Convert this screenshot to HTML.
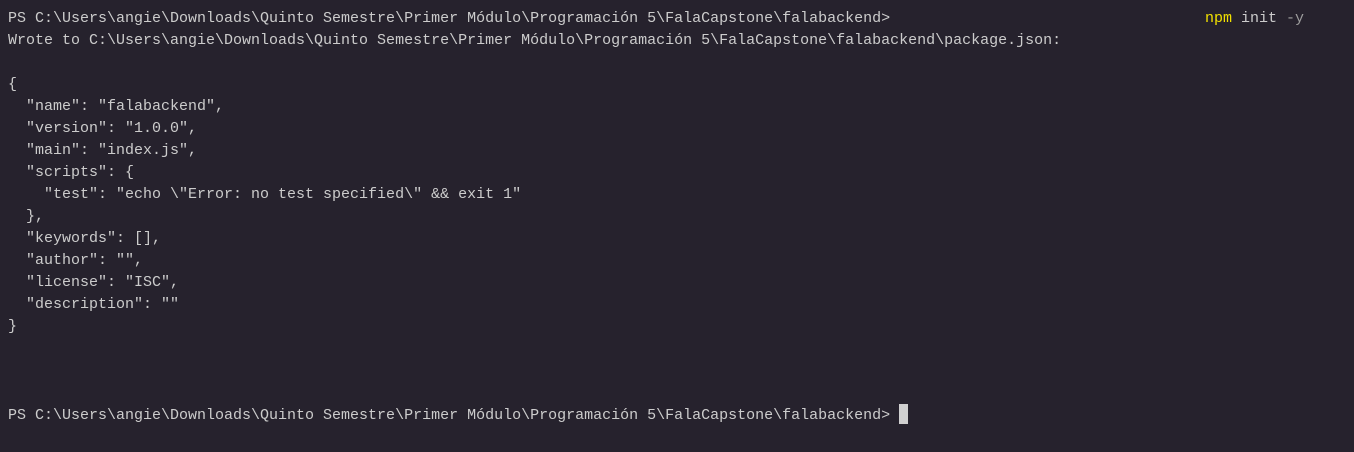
<!DOCTYPE html>
<html><head><meta charset="utf-8"><style>
html,body{margin:0;padding:0;width:1354px;height:452px;background:#26222d;overflow:hidden}
pre{position:absolute;left:8px;top:8px;margin:0;font-family:"Liberation Mono",monospace;font-size:15px;line-height:22px;color:#cccccc;white-space:pre}
.y{color:#f1e000}.g{color:#9d9d9d}
.cur{display:inline-block;width:9px;height:20px;background:#d0d0d0;vertical-align:-5px}
#npm{position:absolute;left:1205px;top:8px;margin:0;font-family:"Liberation Mono",monospace;font-size:15px;line-height:22px;color:#cccccc}
</style></head><body>
<pre>PS C:\Users\angie\Downloads\Quinto Semestre\Primer Módulo\Programación 5\FalaCapstone\falabackend>
Wrote to C:\Users\angie\Downloads\Quinto Semestre\Primer Módulo\Programación 5\FalaCapstone\falabackend\package.json:

{
  "name": "falabackend",
  "version": "1.0.0",
  "main": "index.js",
  "scripts": {
    "test": "echo \"Error: no test specified\" &amp;&amp; exit 1"
  },
  "keywords": [],
  "author": "",
  "license": "ISC",
  "description": ""
}



PS C:\Users\angie\Downloads\Quinto Semestre\Primer Módulo\Programación 5\FalaCapstone\falabackend> <span class="cur"></span></pre>
<div id="npm"><span class="y">npm</span> init <span class="g">-y</span></div>
</body></html>
